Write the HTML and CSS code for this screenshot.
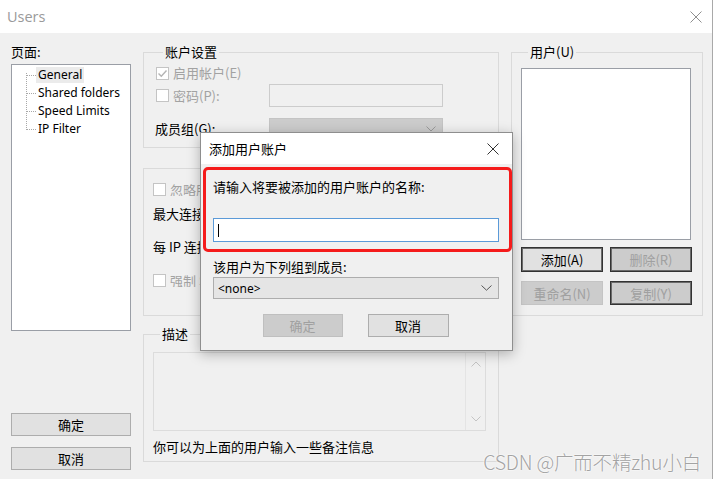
FILE: index.html
```html
<!DOCTYPE html>
<html>
<head>
<meta charset="utf-8">
<link rel="stylesheet" href="styles.css">
</head>
<body>
<div class="page">
  <div class="window">
    <div class="titlebar">
      <span class="title">Users</span>
      <svg class="close" width="12" height="12" viewBox="0 0 12 12"><path d="M0.5 0.5 L11.5 11.5 M11.5 0.5 L0.5 11.5" stroke="#8f8f8f" stroke-width="1" fill="none"/></svg>
    </div>
    <div class="main">
      <div class="col-left">
        <div class="lbl">页面:</div>
        <div class="tree">
          <ul class="tree-list">
            <li><span class="sel">General</span></li>
            <li><span>Shared folders</span></li>
            <li><span>Speed Limits</span></li>
            <li><span>IP Filter</span></li>
          </ul>
        </div>
        <button class="btn btn-main b-ok">确定</button>
        <button class="btn btn-main b-cancel">取消</button>
      </div>

      <div class="col-mid">
        <div class="group g1">
          <div class="gtitle">账户设置</div>
          <div class="row r1">
            <span class="chk checked"><svg width="11" height="11" viewBox="0 0 11 11"><path d="M1.5 5.5 L4.3 8.3 L9.5 2.5" stroke="#b4b4b4" stroke-width="1.4" fill="none"/></svg></span>
            <span class="dis">启用帐户(E)</span>
          </div>
          <div class="row r2">
            <div class="cell"><span class="chk"></span><span class="dis">密码(P):</span></div>
            <div class="edit-dis"></div>
          </div>
          <div class="row r3">
            <div class="cell"><span class="plain">成员组(G):</span></div>
            <div class="combo-dis"><svg width="10" height="6" viewBox="0 0 10 6"><path d="M0.5 0.5 L5 5 L9.5 0.5" stroke="#9a9a9a" fill="none"/></svg></div>
          </div>
        </div>

        <div class="group g2">
          <div class="row s1"><span class="chk"></span><span class="dis">忽略服务器速度限制</span></div>
          <div class="row s2">最大连接数:</div>
          <div class="row s3">每 IP 连接限制:</div>
          <div class="row s4"><span class="chk"></span><span class="dis">强制 SSL 登录</span></div>
        </div>

        <div class="group g3">
          <div class="gtitle">描述</div>
          <div class="memo">
            <div class="memo-text"></div>
            <div class="memo-scroll">
              <svg width="10" height="6" viewBox="0 0 10 6"><path d="M0.5 5.5 L5 1 L9.5 5.5" stroke="#c4c4c4" fill="none"/></svg>
              <svg width="10" height="6" viewBox="0 0 10 6"><path d="M0.5 0.5 L5 5 L9.5 0.5" stroke="#c4c4c4" fill="none"/></svg>
            </div>
          </div>
          <div class="hint">你可以为上面的用户输入一些备注信息</div>
        </div>
      </div>

      <div class="col-right">
        <div class="group gu">
          <div class="gtitle">用户(U)</div>
          <div class="userlist"></div>
          <div class="ubtns">
            <button class="btn ub ub-def">添加(A)</button>
            <button class="btn ub ub-dis ub-dark">删除(R)</button>
            <button class="btn ub ub-dis">重命名(N)</button>
            <button class="btn ub ub-dis ub-dark">复制(Y)</button>
          </div>
        </div>
      </div>
    </div>

    <div class="dialog">
      <div class="dtitle">
        <span>添加用户账户</span>
        <svg width="12" height="12" viewBox="0 0 12 12"><path d="M0.5 0.5 L11.5 11.5 M11.5 0.5 L0.5 11.5" stroke="#333" stroke-width="1" fill="none"/></svg>
      </div>
      <div class="dbody">
        <div class="dl1">请输入将要被添加的用户账户的名称:</div>
        <div class="dinput"><span class="caret"></span></div>
        <div class="dl2">该用户为下列组到成员:</div>
        <div class="dcombo"><span>&lt;none&gt;</span><svg width="11" height="6" viewBox="0 0 11 6"><path d="M0.5 0.5 L5.5 5.2 L10.5 0.5" stroke="#555" fill="none"/></svg></div>
        <div class="dbtns">
          <button class="btn dbtn dbtn-dis">确定</button>
          <button class="btn dbtn">取消</button>
        </div>
      </div>
      <div class="redbox"></div>
    </div>
  </div>
  <div class="watermark">CSDN @广而不精zhu小白</div>
</div>
</body>
</html>
```

FILE: styles.css
```css
* { box-sizing: border-box; }
html, body { margin: 0; padding: 0; background: #fff; }
body {
  font-family: "Noto Sans CJK SC", "Noto Sans", sans-serif;
  font-size: 13px;
  color: #000;
}
.page {
  position: relative;
  width: 715px;
  height: 479px;
  overflow: hidden;
  background: #fff;
}
.window {
  position: relative;
  width: 713px;
  height: 479px;
  border-right: 1px solid #a9a9a9;
  background: #f0f0f0;
  display: flex;
  flex-direction: column;
}
.titlebar {
  height: 33px;
  background: #fff;
  display: flex;
  align-items: center;
  justify-content: space-between;
  padding: 0 10px 0 7px;
}
.title {
  font-family: "Open Sans", "Noto Sans", sans-serif;
  font-size: 14.5px;
  color: #9a9a9a;
  line-height: 18px;
}
.close { display: block; }

.main {
  flex: 1;
  display: grid;
  grid-template-columns: 120px 356px 192px;
  column-gap: 12px;
  padding-left: 11px;
  align-items: start;
}

/* left column */
.col-left {
  display: flex;
  flex-direction: column;
  padding-top: 10px;
}
.lbl { line-height: 18px; height: 18px; }
.tree {
  margin-top: 3px;
  height: 267px;
  border: 1px solid #9a9ea6;
  background: #fff;
  padding: 1px 0 0 14px;
}
.tree-list {
  list-style: none;
  margin: 0;
  padding: 0;
  background: repeating-linear-gradient(to bottom, #a8a8a8 0 1px, transparent 1px 2px) no-repeat 0 7px / 1px 57px;
}
.tree-list li {
  display: flex;
  align-items: center;
  height: 18px;
  font-family: "Noto Sans", sans-serif;
  font-size: 12px;
}
.tree-list li::before {
  content: "";
  width: 10px;
  border-top: 1px dotted #a8a8a8;
}
.tree-list li span { padding: 0 2px; line-height: 16px; }
.tree-list li span.sel { background: #ebebeb; }

.btn {
  font-family: "Noto Sans CJK SC", sans-serif;
  font-size: 13px;
  color: #000;
  margin: 0;
  padding: 0;
  display: flex;
  align-items: center;
  justify-content: center;
  line-height: 1;
}
.btn-main {
  height: 23px;
  width: 120px;
  border: 1px solid #adadad;
  background: #e1e1e1;
}
.b-ok { margin-top: 82px; }
.b-cancel { margin-top: 11px; }

/* groups */
.group {
  border: 1px solid #dadada;
  display: flex;
  flex-direction: column;
}
.gtitle {
  align-self: flex-start;
  margin-top: -9px;
  margin-left: 7px;
  padding: 0 2px;
  line-height: 16px;
  height: 16px;
  background: #f0f0f0;
}
.col-mid { display: flex; flex-direction: column; }
.g1 { margin-top: 19px; height: 96px; padding-left: 12px; }
.row { display: flex; align-items: center; }
.chk {
  width: 13px;
  height: 13px;
  border: 1px solid #c4c4c4;
  background: #fff;
  display: inline-flex;
  align-items: center;
  justify-content: center;
  margin-right: 4px;
  flex: none;
}
.dis { color: #a2a2a2; line-height: 16px; }
.plain { line-height: 16px; }
.r1 { margin-top: 6px; height: 14px; }
.r2 { margin-top: 4px; height: 23px; }
.r3 { margin-top: 11px; height: 22px; }
.cell { width: 113px; display: flex; align-items: center; }
.r3 .cell { margin-left: -1px; width: 114px; }
.edit-dis {
  width: 174px;
  height: 23px;
  border: 1px solid #cccccc;
  background: #f0f0f0;
}
.combo-dis {
  width: 174px;
  height: 22px;
  border: 1px solid #c4c4c4;
  background: #cccccc;
  display: flex;
  align-items: center;
  justify-content: flex-end;
  padding-right: 6px;
}

.g2 { margin-top: 20px; height: 148px; padding-left: 9px; }
/* rows run under the dialog, so only the part left of it is drawn */
.g2 .row {
  width: 47px;
  overflow: hidden;
  white-space: nowrap;
}
.s1 { margin-top: 14px; height: 13px; }
.s2 { margin-top: 8px; height: 18px; }
.s3 { margin-top: 15px; height: 18px; }
.s4 { margin-top: 19px; height: 13px; }

.g3 { margin-top: 18px; height: 128px; padding-left: 9px; }
.memo {
  margin-top: 10px;
  width: 333px;
  height: 79px;
  border: 1px solid #dcdcdc;
  background: #f0f0f0;
  display: flex;
}
.memo-text { flex: 1; }
.memo-scroll {
  width: 20px;
  border-left: 1px solid #e4e4e4;
  display: flex;
  flex-direction: column;
  justify-content: space-between;
  align-items: center;
  padding: 8px 0 8px;
}
.hint { margin-top: 7px; line-height: 18px; height: 18px; }

/* right column */
.gu { margin-top: 19px; height: 264px; padding: 0 11px 0 9px; }
.userlist {
  margin-top: 8px;
  width: 170px;
  height: 172px;
  border: 1px solid #9a9ea6;
  background: #fff;
}
.ubtns {
  display: grid;
  grid-template-columns: 82px 82px;
  column-gap: 7px;
  row-gap: 9px;
  margin-top: 7px;
}
.ub { height: 25px; }
.ubtns .ub:nth-child(n+3) { height: 24px; }
.ub-def {
  border: 1px solid #333;
  box-shadow: inset 0 0 0 1px #6b6b6b;
  background: #e1e1e1;
}
.ub-dis {
  background: #cccccc;
  color: #a0a0a0;
  border: 1px solid #c4c4c4;
}
.ub-dark {
  border: 1px solid #333;
  box-shadow: inset 0 0 0 1px #6b6b6b;
}

/* dialog */
.dialog {
  position: absolute;
  left: 200px;
  top: 132px;
  width: 313px;
  height: 219px;
  border: 1px solid #8e8e8e;
  background: #f0f0f0;
  box-shadow: 0 3px 12px rgba(0,0,0,0.28);
  display: flex;
  flex-direction: column;
}
.dtitle {
  height: 31px;
  background: #fff;
  display: flex;
  align-items: center;
  justify-content: space-between;
  padding: 0 13px 0 8px;
  line-height: 16px;
}
.dbody {
  padding: 0 12px;
  display: flex;
  flex-direction: column;
}
.dl1 { margin-top: 14px; line-height: 18px; height: 18px; }
.dinput {
  margin-top: 22px;
  height: 24px;
  width: 286px;
  border: 1px solid #5b9ad8;
  background: #fff;
  display: flex;
  align-items: center;
  padding-left: 4px;
}
.caret { width: 1px; height: 13px; background: #000; }
.dl2 { margin-top: 16px; line-height: 18px; height: 18px; }
.dcombo {
  margin-top: 1px;
  height: 22px;
  width: 286px;
  border: 1px solid #adadad;
  background: #e5e5e5;
  display: flex;
  align-items: center;
  justify-content: space-between;
  padding: 0 6px 0 4px;
  font-family: "Noto Sans", sans-serif;
  font-size: 12px;
}
.dbtns {
  margin-top: 15px;
  display: flex;
  justify-content: center;
  gap: 25px;
  padding-right: 2px;
}
.dbtn {
  width: 81px;
  height: 23px;
  border: 1px solid #adadad;
  background: #e1e1e1;
}
.dbtn-dis {
  width: 80px;
  background: #cccccc;
  color: #a0a0a0;
  border-color: #bfbfbf;
}
.redbox {
  position: absolute;
  left: 2px;
  top: 34px;
  width: 309px;
  height: 85px;
  border: 3px solid #f51b1b;
  border-radius: 5px;
  pointer-events: none;
}

.watermark {
  position: absolute;
  right: 14px;
  top: 450px;
  font-family: "Noto Sans CJK SC", sans-serif;
  font-weight: 300;
  font-size: 19.5px;
  line-height: 24px;
  color: #a3a3a3;
  text-shadow: 0 0 2px #fff, 0 0 2px #fff;
  letter-spacing: -0.2px;
}
```
